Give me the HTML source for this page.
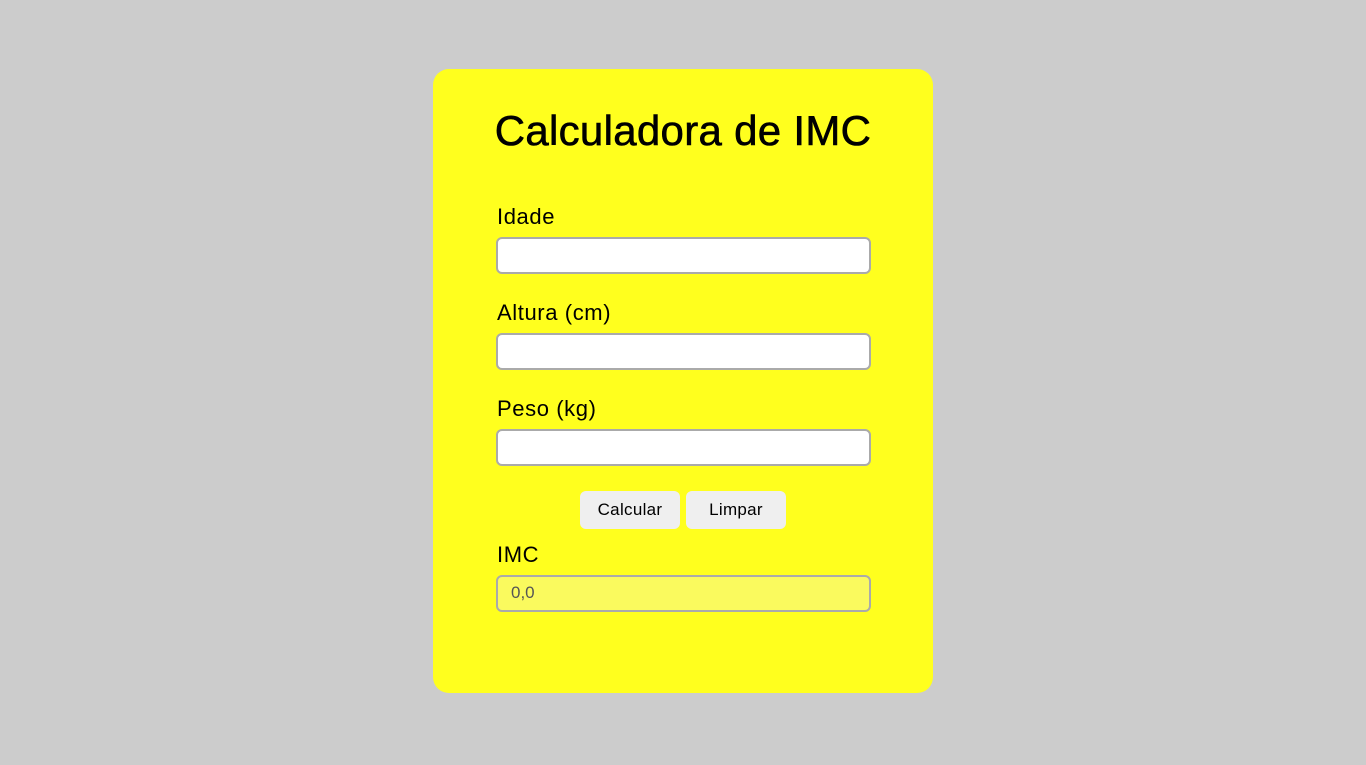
<!DOCTYPE html>
<html><head><meta charset="utf-8"><style>
html,body{margin:0;padding:0;}
body{width:1366px;height:765px;background:#cccccc;position:relative;overflow:hidden;font-family:"Liberation Sans",sans-serif;}
.card{position:absolute;left:433px;top:69px;width:500px;height:624px;background:#ffff1e;border-radius:16px;}
h1{position:absolute;left:433px;top:107px;width:500px;margin:0;text-align:center;font-size:42px;letter-spacing:0.3px;font-weight:normal;line-height:48px;color:#000;-webkit-text-stroke:0.6px #000;}
.lbl{position:absolute;left:497px;font-size:22px;letter-spacing:0.6px;color:#000;line-height:24px;}
.inp{position:absolute;left:496px;width:371px;height:33px;border:2px solid #aaaaaa;border-radius:6px;background:#fff;}
.btn{position:absolute;top:491px;width:100px;height:38px;background:#efefef;border-radius:6px;font-size:17px;letter-spacing:0.3px;line-height:38px;text-align:center;color:#000;}
</style></head><body>
<div class="card"></div>
<h1>Calculadora de IMC</h1>
<div class="lbl" style="top:205px">Idade</div>
<div class="inp" style="top:237px"></div>
<div class="lbl" style="top:301px">Altura (cm)</div>
<div class="inp" style="top:333px"></div>
<div class="lbl" style="top:397px">Peso (kg)</div>
<div class="inp" style="top:429px"></div>
<div class="btn" style="left:580px">Calcular</div>
<div class="btn" style="left:686px">Limpar</div>
<div class="lbl" style="top:543px">IMC</div>
<div class="inp" style="top:575px;background:#fafa5e;"><span style="position:absolute;left:13px;top:6px;font-size:17px;color:#555;">0,0</span></div>
</body></html>
